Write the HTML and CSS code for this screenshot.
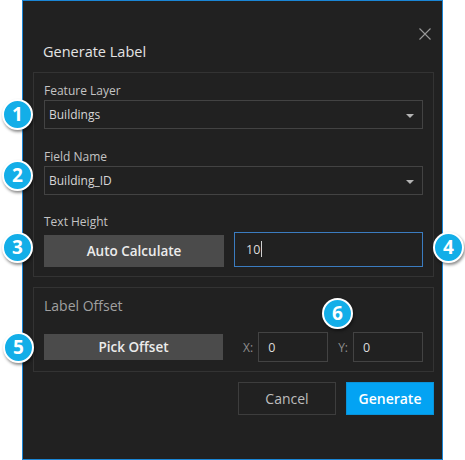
FILE: index.html
```html
<!DOCTYPE html>
<html>
<head>
<meta charset="utf-8">
<link rel="stylesheet" href="styles.css">
</head>
<body>
<div class="stage">
  <div class="dialog">
    <div class="header">
      <div class="title">Generate Label</div>
      <svg class="close" width="12" height="12" viewBox="0 0 12 12"><path d="M0.5 0.5 L11.5 11.5 M11.5 0.5 L0.5 11.5" stroke="#9a9a9a" stroke-width="1.1" fill="none"/></svg>
    </div>
    <div class="group group-main">
      <div class="field">
        <div class="label">Feature Layer</div>
        <div class="select"><span>Buildings</span><span class="arrow"></span></div>
      </div>
      <div class="field">
        <div class="label">Field Name</div>
        <div class="select"><span>Building_ID</span><span class="arrow"></span></div>
      </div>
      <div class="field field-height">
        <div class="label">Text Height</div>
        <div class="height-row">
          <div class="btn btn-gray btn-auto">Auto Calculate</div>
          <div class="input input-focus"><span>10</span><span class="caret"></span></div>
        </div>
      </div>
    </div>
    <div class="group group-offset">
      <div class="group-title">Label Offset</div>
      <div class="offset-row">
        <div class="btn btn-gray btn-pick">Pick Offset</div>
        <div class="xy">
          <span class="xy-label">X:</span>
          <div class="input input-small">0</div>
          <span class="xy-label xy-gap">Y:</span>
          <div class="input input-small">0</div>
        </div>
      </div>
    </div>
    <div class="footer">
      <div class="btn btn-cancel">Cancel</div>
      <div class="btn btn-primary">Generate</div>
    </div>
  </div>
  <div class="badge b1">1</div>
  <div class="badge b2">2</div>
  <div class="badge b3">3</div>
  <div class="badge b4">4</div>
  <div class="badge b5">5</div>
  <div class="badge b6">6</div>
</div>
</body>
</html>
```
FILE: styles.css
```css
html, body {
  margin: 0;
  padding: 0;
  background: #ffffff;
}
.stage {
  position: relative;
  width: 465px;
  height: 460px;
  padding-left: 22px;
  box-sizing: border-box;
  font-family: "Open Sans", "Noto Sans", sans-serif;
}
.dialog {
  width: 421px;
  height: 460px;
  box-sizing: border-box;
  border: 1px solid #1a86d6;
  background: #212121;
  padding: 0 8px 0 10px;
}
.header {
  display: flex;
  justify-content: space-between;
  align-items: flex-start;
  height: 71px;
}
.title {
  margin-top: 41px;
  margin-left: 10px;
  font-size: 14.5px;
  line-height: 20px;
  color: #e4e4e4;
}
.close {
  display: block;
  margin-top: 27px;
  margin-right: 3px;
}
.group {
  border: 1px solid #333333;
  padding: 0 10px;
}
.group-main {
  padding-top: 10px;
  padding-bottom: 9px;
}
.field + .field {
  margin-top: 20px;
}
.field-height {
  margin-top: 19px !important;
}
.label {
  font-size: 12px;
  line-height: 16px;
  color: #c4c4c4;
  margin-bottom: 1px;
}
.field-height .label {
  margin-bottom: 2px;
}
.select {
  height: 29px;
  box-sizing: border-box;
  border: 1px solid #434343;
  display: flex;
  align-items: center;
  justify-content: space-between;
  padding: 0 8px 0 4px;
  font-size: 12px;
  color: #d6d6d6;
}
.arrow {
  width: 0;
  height: 0;
  border-left: 4px solid transparent;
  border-right: 4px solid transparent;
  border-top: 4px solid #b4b4b4;
  margin-top: 2px;
}
.height-row {
  display: flex;
  align-items: flex-end;
  gap: 10px;
}
.btn {
  box-sizing: border-box;
  display: flex;
  align-items: center;
  justify-content: center;
}
.btn-gray {
  background: #4b4b4b;
  color: #ececec;
  font-weight: 600;
  font-size: 13.5px;
}
.btn-auto {
  width: 180px;
  height: 32px;
}
.input {
  box-sizing: border-box;
  border: 1px solid #434343;
  display: flex;
  align-items: center;
  color: #dcdcdc;
  font-size: 12.5px;
}
.input-focus {
  flex: 1;
  height: 35px;
  border-color: #3b7cc0;
  padding-left: 11px;
  padding-bottom: 1px;
}
.caret {
  width: 1px;
  height: 16px;
  background: #d0d0d0;
  margin-left: 1px;
}
.group-offset {
  margin-top: 10px;
  padding-top: 8px;
  padding-bottom: 9px;
}
.group-title {
  font-size: 14px;
  line-height: 20px;
  color: #a0a0a0;
}
.offset-row {
  margin-top: 16px;
  display: flex;
  align-items: center;
  height: 30px;
}
.btn-pick {
  width: 179px;
  height: 26px;
}
.xy {
  margin-left: auto;
  display: flex;
  align-items: center;
}
.xy-label {
  font-size: 12px;
  color: #8e8e8e;
  margin-right: 5px;
}
.xy-gap {
  margin-left: 10px;
}
.input-small {
  width: 70px;
  height: 30px;
  padding-left: 9px;
}
.footer {
  margin-top: 10px;
  display: flex;
  justify-content: flex-end;
  gap: 10px;
}
.btn-cancel {
  width: 98px;
  height: 33px;
  border: 1px solid #3d3d3d;
  color: #bdbdbd;
  font-size: 14px;
}
.btn-primary {
  width: 88px;
  height: 33px;
  background: #03a3f3;
  border: 1px solid #0a92d8;
  color: #ffffff;
  font-size: 14px;
  font-weight: 600;
}
.badge {
  position: absolute;
  width: 31px;
  height: 31px;
  box-sizing: border-box;
  border-radius: 50%;
  background: #13aee8;
  border: 2px solid #ffffff;
  box-shadow: 1px 2px 3px rgba(0, 0, 0, 0.45);
  color: #ffffff;
  font-family: "Open Sans", "Noto Sans", sans-serif;
  font-weight: 700;
  font-size: 19px;
  line-height: 27px;
  text-align: center;
}
.b1 { left: 2px; top: 99px; }
.b2 { left: 2px; top: 160px; }
.b3 { left: 2px; top: 232px; }
.b4 { left: 433px; top: 232px; }
.b5 { left: 3px; top: 332px; }
.b6 { left: 322px; top: 298px; }
```
